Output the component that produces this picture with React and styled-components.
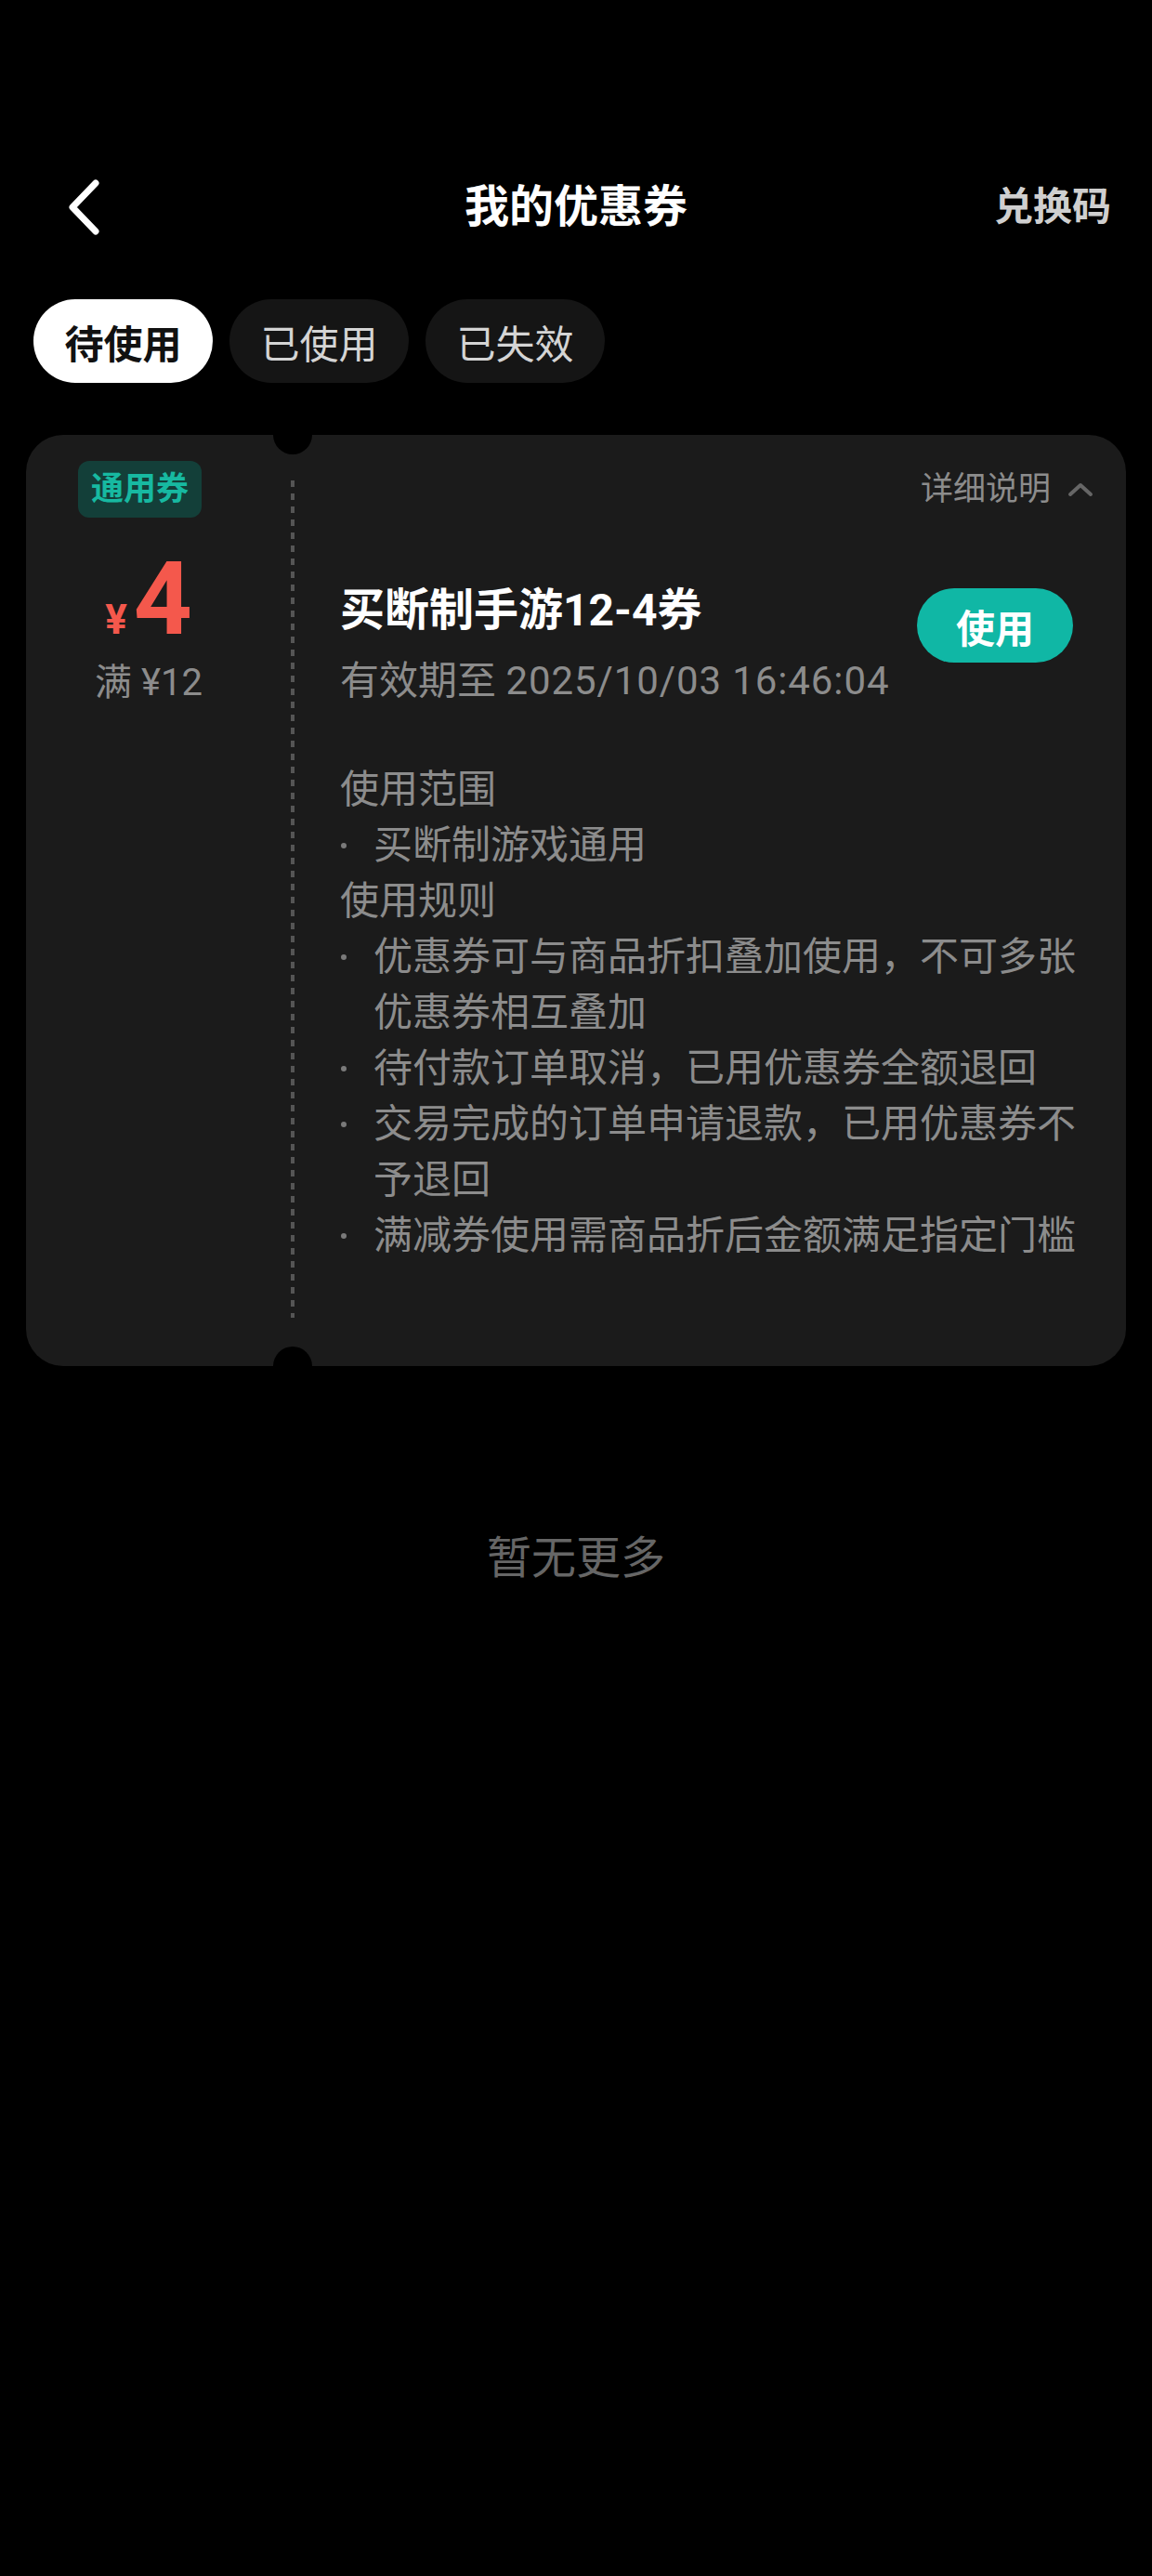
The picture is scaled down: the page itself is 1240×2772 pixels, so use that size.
import React from "react";
import styled, { createGlobalStyle } from "styled-components";

const GlobalStyle = createGlobalStyle`
  html, body {
    margin: 0;
    padding: 0;
    background: #000;
  }
  body {
    font-family: "Roboto", "Noto Sans CJK SC", sans-serif;
    -webkit-font-smoothing: antialiased;
  }
`;

const Page = styled.div`
  min-height: 2772px;
  background: #000;
  display: flex;
  flex-direction: column;
`;

const NavBar = styled.div`
  margin-top: 191px;
  height: 64px;
  padding: 0 44px;
  display: grid;
  grid-template-columns: 1fr auto 1fr;
  align-items: center;
`;

const BackButton = styled.button`
  width: 40px;
  height: 64px;
  margin-left: 26px;
  padding: 0;
  border: none;
  background: none;
  display: flex;
`;

const Title = styled.div`
  font-size: 48px;
  font-weight: 700;
  color: #fff;
  line-height: 64px;
`;

const RedeemLink = styled.div`
  justify-self: end;
  font-size: 42px;
  font-weight: 700;
  color: #cfcfcf;
  line-height: 64px;
`;

const Tabs = styled.div`
  margin-top: 67px;
  padding-left: 36px;
  display: flex;
  gap: 18px;
`;

const Tab = styled.div`
  width: 193px;
  height: 90px;
  border-radius: 45px;
  display: flex;
  align-items: center;
  justify-content: center;
  font-size: 42px;
  font-weight: ${(p) => (p.$active ? 700 : 400)};
  color: ${(p) => (p.$active ? "#111" : "#d4d4d4")};
  background: ${(p) => (p.$active ? "#fff" : "#151515")};
`;

const Card = styled.div`
  margin: 56px 28px 0;
  background: #1b1b1b;
  border-radius: 40px;
  display: flex;
`;

const LeftCol = styled.div`
  width: 264px;
  padding: 28px 21px 0 0;
  display: flex;
  flex-direction: column;
  align-items: center;
`;

const Badge = styled.div`
  align-self: flex-start;
  margin-left: 56px;
  height: 61px;
  padding: 0 14px;
  border-radius: 12px;
  background: #133f39;
  color: #17b9a1;
  font-size: 35px;
  font-weight: 700;
  line-height: 61px;
`;

const Price = styled.div`
  margin-top: 33px;
  display: flex;
  align-items: baseline;
  color: #f4584c;
  font-family: "Roboto", sans-serif;
  font-weight: 700;
`;

const Currency = styled.span`
  font-size: 44px;
  line-height: 44px;
  margin-right: 7px;
`;

const Amount = styled.span`
  font-size: 110px;
  line-height: 110px;
`;

const Threshold = styled.div`
  margin-top: 10px;
  font-size: 40px;
  line-height: 50px;
  color: #8c8c8c;
`;

const DividerCol = styled.div`
  position: relative;
  width: 4px;
  display: flex;
  flex-direction: column;

  &::before,
  &::after {
    content: "";
    position: absolute;
    left: -19px;
    width: 42px;
    height: 42px;
    border-radius: 50%;
    background: #000;
  }
  &::before {
    top: -21px;
  }
  &::after {
    bottom: -21px;
  }
`;

const Dashes = styled.div`
  flex: 1;
  margin: 49px 0 52px;
  background: repeating-linear-gradient(
    to bottom,
    #555 0,
    #555 7px,
    transparent 7px,
    transparent 14px
  );
`;

const RightCol = styled.div`
  flex: 1;
  padding: 40px 35px 110px 49px;
  display: flex;
  flex-direction: column;
`;

const DetailToggle = styled.div`
  align-self: flex-end;
  display: flex;
  align-items: center;
  gap: 18px;
  font-size: 35px;
  line-height: 38px;
  color: #8c8c8c;
`;

const HeadRow = styled.div`
  margin-top: 81px;
  display: flex;
  justify-content: space-between;
  align-items: flex-start;
`;

const CouponName = styled.div`
  font-size: 48px;
  font-weight: 700;
  line-height: 60px;
  color: #fff;
`;

const Expiry = styled.div`
  margin-top: 18px;
  font-size: 42px;
  line-height: 56px;
  color: #8c8c8c;
`;

const ExpiryTime = styled.span`
  letter-spacing: 0.9px;
`;

const UseButton = styled.button`
  margin: 6px 22px 0 0;
  width: 168px;
  height: 80px;
  border: none;
  border-radius: 40px;
  background: #10b7a5;
  color: #fff;
  font-family: "Roboto", "Noto Sans CJK SC", sans-serif;
  font-size: 42px;
  font-weight: 700;
  padding: 0;
`;

const Rules = styled.div`
  margin-top: 59px;
  font-size: 42px;
  line-height: 60px;
  color: #8c8c8c;
`;

const RuleItem = styled.div`
  display: flex;
`;

const Dot = styled.span`
  width: 36px;
  height: 60px;
  flex-shrink: 0;
  display: flex;
  align-items: center;

  &::before {
    content: "";
    width: 6px;
    height: 6px;
    margin-left: 1px;
    border-radius: 50%;
    background: #7a7a7a;
  }
`;

const EndNote = styled.div`
  margin-top: 177px;
  text-align: center;
  font-size: 48px;
  line-height: 60px;
  color: #666;
`;

const rules = [
  { title: "使用范围", items: ["买断制游戏通用"] },
  {
    title: "使用规则",
    items: [
      "优惠券可与商品折扣叠加使用，不可多张优惠券相互叠加",
      "待付款订单取消，已用优惠券全额退回",
      "交易完成的订单申请退款，已用优惠券不予退回",
      "满减券使用需商品折后金额满足指定门槛",
    ],
  },
];

const tabs = ["待使用", "已使用", "已失效"];

function App() {
  return (
    <Page>
      <GlobalStyle />
      <NavBar>
        <BackButton>
          <svg width="40" height="64" viewBox="0 0 40 64">
            <path
              d="M33 6 L8 32 L33 58"
              fill="none"
              stroke="#fff"
              strokeWidth="7"
              strokeLinecap="round"
              strokeLinejoin="round"
            />
          </svg>
        </BackButton>
        <Title>我的优惠券</Title>
        <RedeemLink>兑换码</RedeemLink>
      </NavBar>

      <Tabs>
        {tabs.map((t, i) => (
          <Tab key={t} $active={i === 0}>
            {t}
          </Tab>
        ))}
      </Tabs>

      <Card>
        <LeftCol>
          <Badge>通用券</Badge>
          <Price>
            <Currency>¥</Currency>
            <Amount>4</Amount>
          </Price>
          <Threshold>满 ¥12</Threshold>
        </LeftCol>

        <DividerCol>
          <Dashes />
        </DividerCol>

        <RightCol>
          <DetailToggle>
            详细说明
            <svg width="28" height="16" viewBox="0 0 28 16">
              <path
                d="M3 13 L14 3 L25 13"
                fill="none"
                stroke="#666"
                strokeWidth="4"
                strokeLinecap="round"
                strokeLinejoin="round"
              />
            </svg>
          </DetailToggle>

          <HeadRow>
            <div>
              <CouponName>买断制手游12-4券</CouponName>
              <Expiry>
                有效期至 <ExpiryTime>2025/10/03 16:46:04</ExpiryTime>
              </Expiry>
            </div>
            <UseButton>使用</UseButton>
          </HeadRow>

          <Rules>
            {rules.map((section) => (
              <React.Fragment key={section.title}>
                <div>{section.title}</div>
                {section.items.map((item) => (
                  <RuleItem key={item}>
                    <Dot />
                    <span>{item}</span>
                  </RuleItem>
                ))}
              </React.Fragment>
            ))}
          </Rules>
        </RightCol>
      </Card>

      <EndNote>暂无更多</EndNote>
    </Page>
  );
}

export default App;
